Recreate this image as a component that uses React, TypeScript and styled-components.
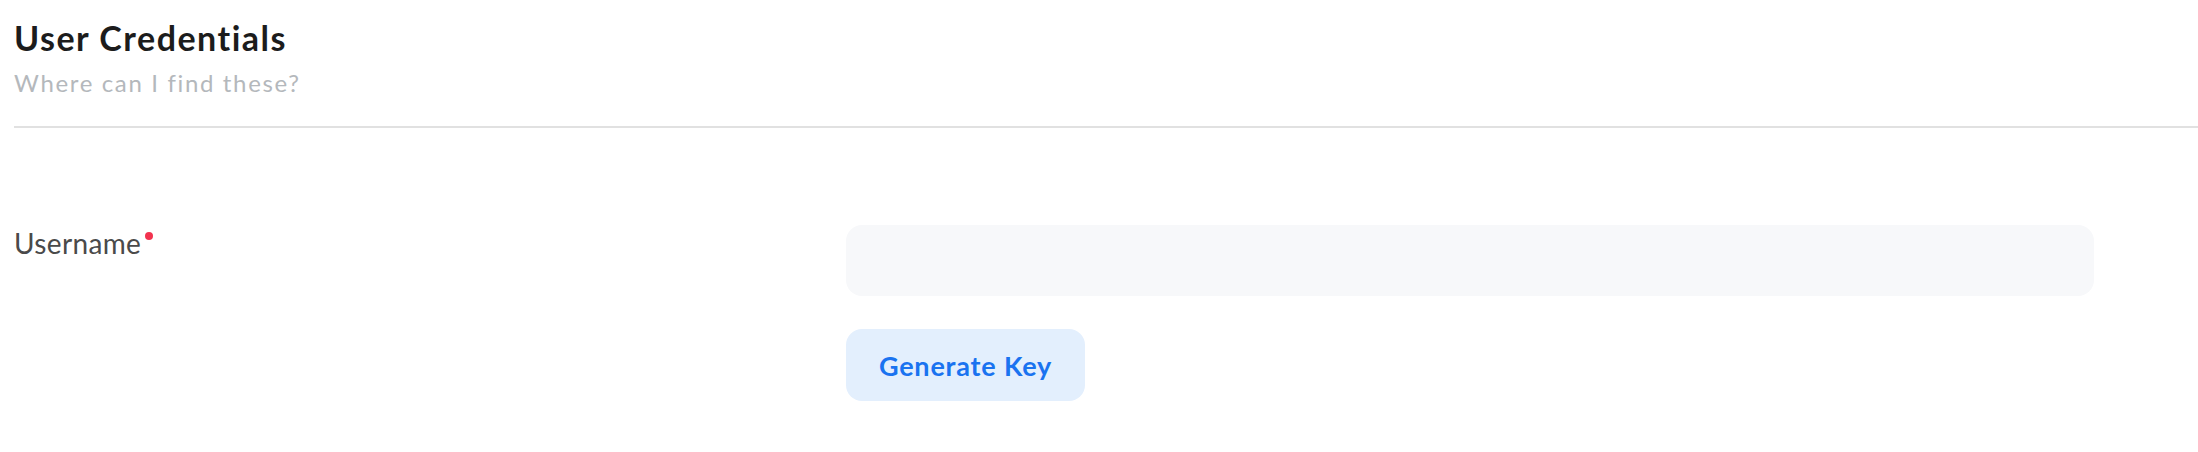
import React from "react";
import styled, { createGlobalStyle } from "styled-components";

const GlobalStyle = createGlobalStyle`
  html, body {
    margin: 0;
    padding: 0;
    background: #ffffff;
  }
  body {
    font-family: Lato, "Open Sans", Arial, sans-serif;
  }
  * { box-sizing: border-box; }
`;

const Page = styled.div`
  padding: 16px 0 0 14px;
  width: 2198px;
`;

const Header = styled.header`
  display: flex;
  flex-direction: column;
  align-items: flex-start;
  gap: 8px;
  padding-bottom: 27px;
  border-bottom: 2px solid #e1e1e1;
`;

const Title = styled.h1`
  margin: 0;
  font-family: Lato, sans-serif;
  font-weight: 700;
  font-size: 34px;
  line-height: 43px;
  color: #1c1c1c;
  letter-spacing: 1.5px;
`;

const Subtitle = styled.a`
  font-family: Lato, sans-serif;
  font-weight: 400;
  font-size: 24px;
  line-height: 32px;
  color: #b4b8bc;
  letter-spacing: 1.65px;
  text-decoration: none;
  cursor: pointer;
`;

const FormRow = styled.div`
  display: grid;
  grid-template-columns: 832px 1248px;
  padding-top: 97px;
`;

const Label = styled.label`
  position: relative;
  align-self: start;
  justify-self: start;
  margin-top: 2px;
  font-family: Lato, sans-serif;
  font-size: 28px;
  line-height: 32px;
  color: #4a4a4a;
  letter-spacing: 0.35px;
  padding-right: 12px;
`;

const RequiredDot = styled.span`
  position: absolute;
  top: 5px;
  right: 0;
  width: 8px;
  height: 8px;
  border-radius: 50%;
  background: #f2334f;
`;

const Field = styled.div`
  display: flex;
  flex-direction: column;
  align-items: flex-start;
  gap: 33px;
`;

const Input = styled.input`
  width: 100%;
  height: 71px;
  border: none;
  outline: none;
  border-radius: 16px;
  background: #f7f8fa;
  padding: 0 24px;
  font-family: Lato, sans-serif;
  font-size: 26px;
  color: #333;
`;

const Button = styled.button`
  width: 239px;
  height: 72px;
  border: none;
  border-radius: 16px;
  background: #e3effd;
  color: #1a73f0;
  font-family: Lato, sans-serif;
  font-weight: 700;
  font-size: 27px;
  letter-spacing: 0.8px;
  cursor: pointer;
`;

export default function App() {
  return (
    <>
      <GlobalStyle />
      <Page>
        <Header>
          <Title>User Credentials</Title>
          <Subtitle>Where can I find these?</Subtitle>
        </Header>
        <FormRow>
          <Label htmlFor="username">
            Username
            <RequiredDot />
          </Label>
          <Field>
            <Input id="username" type="text" />
            <Button type="button">Generate Key</Button>
          </Field>
        </FormRow>
      </Page>
    </>
  );
}
